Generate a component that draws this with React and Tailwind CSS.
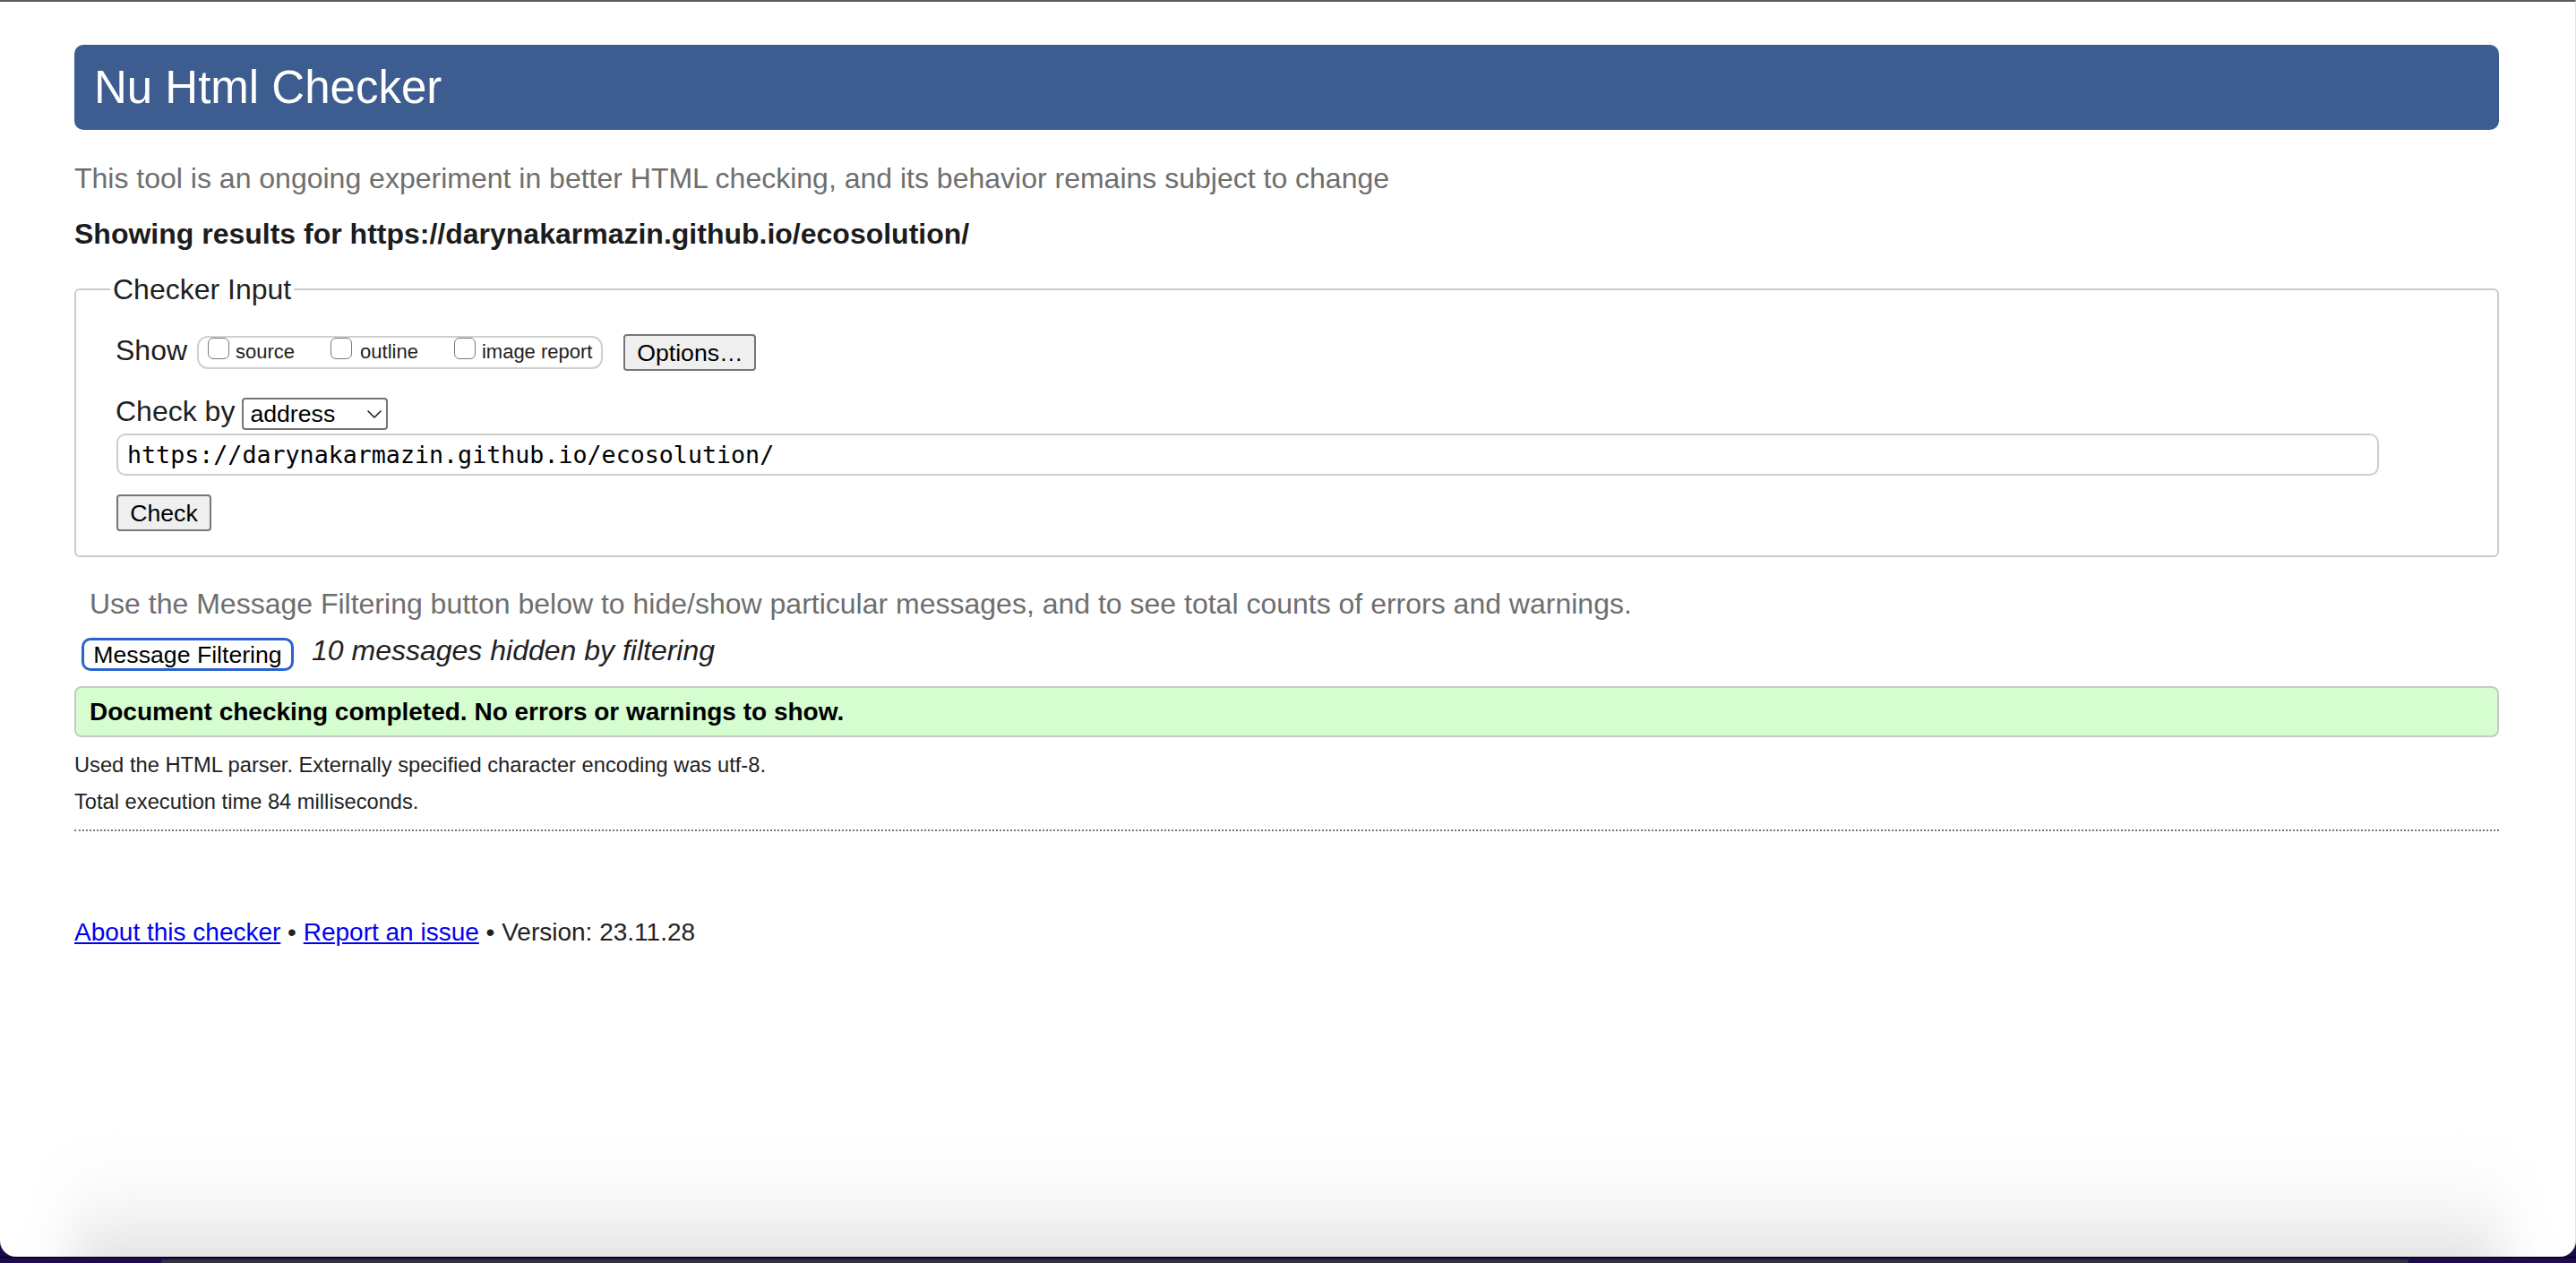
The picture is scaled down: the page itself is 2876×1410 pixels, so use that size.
export default function App() {
  const Checkbox = () => (
    <span className="block w-[24px] h-[24px] shrink-0 rounded-[6px] border-[1.5px] border-[#7a7a7a] bg-white" />
  );
  return (
    <div className="relative w-[2876px] h-[1410px] overflow-hidden bg-[#1c0b48] font-['Liberation_Sans',Arial,sans-serif] text-[#1f1f1f]">
      <div className="relative h-[1403px] overflow-hidden rounded-b-[18px] border-t-2 border-r border-t-[#5c5b60] border-r-[#e2e2e2] bg-white">
        <div className="relative z-10 pl-[83px] pr-[85px] pt-[48px]">
          {/* Header */}
          <div className="flex h-[95px] items-center rounded-[10px] bg-[#3d5c8f] pl-[22px] text-[51px] leading-[51px] text-white">
            Nu Html Checker
          </div>

          <p className="mt-[34px] text-[32px] leading-[40px] text-[#6e6e6e]">
            This tool is an ongoing experiment in better HTML checking, and its behavior remains subject to change
          </p>
          <p className="mt-[22px] text-[32px] font-bold leading-[40px] text-[#1c1c1c]">
            Showing results for https://darynakarmazin.github.io/ecosolution/
          </p>

          {/* Checker Input box */}
          <div className="mt-[41px] rounded-[6px] border-2 border-[#cccccc] pb-[27px] pl-[44px]">
            <div className="-ml-[6px] -mt-[19px] w-fit bg-white px-[3px] text-[32px] leading-[36px] text-[#1f1f1f]">
              Checker Input
            </div>

            {/* Show row */}
            <div className="mt-[32px] flex h-[41px] items-start">
              <span className="-mt-[2px] text-[32px] leading-[40px]">Show</span>
              <div className="ml-[11px] mt-[2px] flex h-[37px] items-start rounded-[12px] border-2 border-[#d0d0d0] pl-[10px] pr-[10px] text-[22px] leading-[26px] text-[#222]">
                <Checkbox />
                <span className="ml-[7px] mt-[3px]">source</span>
                <span className="ml-[40px]"><Checkbox /></span>
                <span className="ml-[9px] mt-[3px]">outline</span>
                <span className="ml-[40px]"><Checkbox /></span>
                <span className="ml-[7px] mt-[3px]">image report</span>
              </div>
              <button className="ml-[23px] flex h-[41px] w-[148px] items-center justify-center rounded-[4px] border-2 border-[#767676] bg-[#efefef] text-[26.67px] leading-[30px] text-black">
                Options…
              </button>
            </div>

            {/* Check by row */}
            <div className="mt-[30px] flex items-start">
              <span className="-mt-[5px] text-[32px] leading-[40px]">Check by</span>
              <div className="ml-[8px] flex h-[36px] w-[163px] items-center justify-between rounded-[4px] border-2 border-[#767676] bg-white pl-[7px] pr-[4px] text-[26.67px] leading-[30px] text-black">
                <span>address</span>
                <svg width="18" height="11" viewBox="0 0 18 11" fill="none">
                  <polyline points="2,2 9,9 16,2" stroke="#222" strokeWidth="1.6" strokeLinecap="round" strokeLinejoin="round" />
                </svg>
              </div>
            </div>

            {/* URL input */}
            <div className="ml-[1px] mt-[4px] flex h-[47px] w-[2526px] items-center rounded-[10px] border-2 border-[#cdcdcd] pl-[10px] font-['DejaVu_Sans_Mono',monospace] text-[26.67px] leading-[30px] text-black">
              https://darynakarmazin.github.io/ecosolution/
            </div>

            <button className="ml-[1px] mt-[21px] flex h-[41px] w-[106px] items-center justify-center rounded-[4px] border-2 border-[#767676] bg-[#efefef] text-[26.67px] leading-[30px] text-black">
              Check
            </button>
          </div>

          <p className="ml-[17px] mt-[32px] text-[32px] leading-[40px] text-[#6e6e6e]">
            Use the Message Filtering button below to hide/show particular messages, and to see total counts of errors and warnings.
          </p>

          <div className="mt-[18px] flex items-start">
            <button className="ml-[8px] flex h-[37px] w-[237px] items-center justify-center rounded-[10px] border-[3px] border-[#2a62d0] bg-white text-[26.67px] leading-[30px] text-black">
              Message Filtering
            </button>
            <span className="ml-[20px] -mt-[6px] text-[32px] italic leading-[40px] text-[#1f1f1f]">
              10 messages hidden by filtering
            </span>
          </div>

          <div className="mt-[17px] flex h-[57px] items-center rounded-[8px] border-2 border-[#c9c9c9] bg-[#d5fdd0] pl-[15px] text-[28px] font-bold leading-[32px] text-black">
            Document checking completed. No errors or warnings to show.
          </div>

          <p className="mt-[17px] text-[23.7px] leading-[28px] text-[#222]">
            Used the HTML parser. Externally specified character encoding was utf-8.
          </p>
          <p className="mt-[13px] text-[23.7px] leading-[28px] text-[#222]">
            Total execution time 84 milliseconds.
          </p>

          <div className="mt-[17px] border-t-2 border-dotted border-[#777777]" />

          <p className="mt-[97px] text-[28px] leading-[32px] text-[#222]">
            <a className="text-[#0000ee] underline" href="#about">About this checker</a>
            {" • "}
            <a className="text-[#0000ee] underline" href="#issue">Report an issue</a>
            {" • Version: 23.11.28"}
          </p>
        </div>

        {/* soft bottom shading of the window */}
        <div className="pointer-events-none absolute bottom-[-40px] left-[80px] right-[80px] h-[150px] bg-linear-to-b from-transparent via-[#f3f3f3] to-[#d2d2d2] blur-[28px]" />
      </div>

      {/* desktop strip below the window */}
      <div className="h-[7px] border-t border-black bg-[#1d0c4a]">
        <div className="ml-[180px] mt-[2px] h-[4px] w-[2509px] rounded-t-[3px] bg-[#34313b]" />
      </div>
    </div>
  );
}
